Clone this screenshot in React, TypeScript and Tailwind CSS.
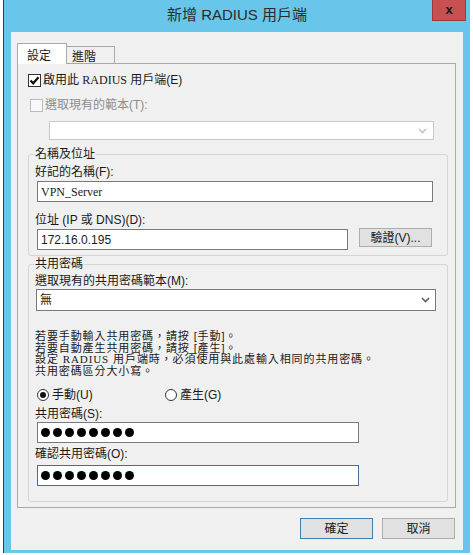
const ui = { fontFamily: '"Liberation Sans", "Noto Sans CJK TC", sans-serif' }
const ming = { fontFamily: '"Liberation Serif", "Noto Sans CJK TC", serif' }

function Chevron({ color }: { color: string }) {
  return (
    <svg width="9" height="6" viewBox="0 0 9 6">
      <polyline points="1,1 4.5,4.5 8,1" fill="none" stroke={color} strokeWidth="1.6" />
    </svg>
  )
}

function Dots() {
  return (
    <div className="flex items-center gap-[3px] pl-[3px]">
      {Array.from({ length: 8 }).map((_, i) => (
        <span key={i} className="block w-[9px] h-[9px] rounded-full bg-black"></span>
      ))}
    </div>
  )
}

function Radio({ checked, label }: { checked?: boolean; label: string }) {
  return (
    <div className="flex items-center h-[14px]">
      <span className="flex items-center justify-center w-[12px] h-[12px] rounded-full border border-[#333] bg-white">
        {checked && <span className="block w-[6px] h-[6px] rounded-full bg-[#111]"></span>}
      </span>
      <span className="ml-[3px]">{label}</span>
    </div>
  )
}

export default function App() {
  return (
    <div className="w-[473px] h-[555px] bg-white overflow-hidden text-[12px] text-[#1a1a1a]" style={ui}>
      <div className="ml-[3px] w-[467px] h-[553px] bg-[#67c6e9] border-l border-[#3d3d3d] flex flex-col">
        {/* title bar */}
        <div className="relative h-[32px] shrink-0 flex items-center justify-center">
          <span className="text-[15px] text-[#2b2b2b] mt-[-2px]">新增 RADIUS 用戶端</span>
          <div className="absolute top-0 right-[4px] w-[34px] h-[21px] bg-[#c75050] border border-t-0 border-[#9b3a3a] flex items-center justify-center">
            <span className="text-[13px] font-bold text-[#1a1a1a] leading-none mt-[-1px]">x</span>
          </div>
        </div>

        {/* client */}
        <div className="ml-[7px] mr-[7px] h-[518px] bg-[#f0f0f0] flex flex-col">
          {/* tabs */}
          <div className="flex items-end ml-[6px] h-[32px] mb-[-1px] relative z-10">
            <div className="w-[50px] h-[21px] bg-white border border-b-0 border-[#a9a9a9] flex items-start pl-[9px] pt-[3px]">設定</div>
            <div className="w-[48px] h-[17px] bg-[#f0f0f0] border border-l-0 border-b-0 border-[#a9a9a9] pl-[5px] pt-[1px] mb-[1px]">進階</div>
          </div>

          {/* panel */}
          <div className="ml-[6px] w-[439px] h-[445px] border border-[#a9a9a9] bg-[#f0f0f0] flex flex-col">
            <div className="flex items-center h-[14px] mt-[9px] ml-[10px]">
              <span className="w-[13px] h-[13px] border border-[#333] bg-white flex items-center justify-center">
                <svg width="11" height="11" viewBox="0 0 11 11">
                  <polyline points="1.5,5.5 4.2,8.3 9.5,2.2" fill="none" stroke="#111" strokeWidth="2.2" />
                </svg>
              </span>
              <span className="ml-[2px]">
                啟用此 <span style={ming}>RADIUS</span> 用戶端(E)
              </span>
            </div>

            <div className="flex items-center h-[14px] mt-[11px] ml-[12px] text-[#8d8d8d]">
              <span className="w-[13px] h-[13px] border border-[#bcbcbc] bg-[#f8f8f8]"></span>
              <span className="ml-[2px]">選取現有的範本(T):</span>
            </div>

            <div className="mt-[9px] ml-[31px] w-[385px] h-[19px] bg-white border border-[#c9c9c9] flex items-center justify-end pr-[6px]">
              <Chevron color="#c4c4c4" />
            </div>

            {/* group 1 */}
            <fieldset className="mt-[7px] ml-[10px] w-[420px] border border-[#d5d5d5] rounded-[3px] pl-[6px] pb-[5px]">
              <legend className="leading-[14px] px-[1px] ml-[-1px]">名稱及位址</legend>
              <div className="h-[14px] leading-[14px] mt-[4px]">好記的名稱(F):</div>
              <div className="mt-[2px] ml-[2px] w-[396px] h-[21px] bg-white border border-[#7a7a7a] flex items-center pl-[3px]" style={ming}>
                VPN_Server
              </div>
              <div className="h-[14px] leading-[14px] mt-[11px]">位址 (IP 或 DNS)(D):</div>
              <div className="flex items-start mt-[2px] ml-[2px]">
                <div className="w-[311px] h-[21px] bg-white border border-[#7a7a7a] flex items-center pl-[3px]">172.16.0.195</div>
                <button className="ml-[11px] mt-[-1px] w-[73px] h-[19px] bg-[#e1e1e1] border border-[#adadad] flex items-center justify-center">驗證(V)...</button>
              </div>
            </fieldset>

            {/* group 2 */}
            <fieldset className="mt-[2px] ml-[10px] w-[420px] border border-[#d5d5d5] rounded-[3px] pl-[6px] pb-[15px]">
              <legend className="leading-[12px] px-[1px] ml-[-1px]">共用密碼</legend>
              <div className="h-[14px] leading-[14px] mt-[4px]">選取現有的共用密碼範本(M):</div>
              <div className="mt-[1px] ml-[1px] w-[400px] h-[22px] bg-white border border-[#7a7a7a] flex items-center justify-between pl-[3px] pr-[5px]">
                <span>無</span>
                <Chevron color="#606060" />
              </div>
              <div className="mt-[20px] text-[11px] tracking-[0.9px] leading-[11.5px]">
                <div>若要手動輸入共用密碼，請按 [手動]。</div>
                <div>若要自動產生共用密碼，請按 [產生]。</div>
                <div>
                  設定 <span style={ming}>RADIUS</span> 用戶端時，必須使用與此處輸入相同的共用密碼。
                </div>
                <div>共用密碼區分大小寫。</div>
              </div>
              <div className="flex items-center mt-[11px] ml-[2px]">
                <div className="w-[128px]">
                  <Radio checked label="手動(U)" />
                </div>
                <Radio label="產生(G)" />
              </div>
              <div className="h-[14px] leading-[14px] mt-[5px]">共用密碼(S):</div>
              <div className="mt-[1px] ml-[2px] w-[322px] h-[21px] bg-white border border-[#7a7a7a] flex items-center">
                <Dots />
              </div>
              <div className="h-[14px] leading-[14px] mt-[4px]">確認共用密碼(O):</div>
              <div className="mt-[4px] ml-[2px] w-[322px] h-[21px] bg-white border border-[#4a6f8e] flex items-center">
                <Dots />
              </div>
            </fieldset>
          </div>

          {/* buttons */}
          <div className="flex justify-end gap-[9px] mt-[10px] mr-[8px]">
            <button className="w-[73px] h-[21px] bg-[#e1e1e1] border border-[#3c7fb1] flex items-center justify-center">確定</button>
            <button className="w-[73px] h-[21px] bg-[#e1e1e1] border border-[#adadad] flex items-center justify-center">取消</button>
          </div>
        </div>
      </div>
    </div>
  )
}
